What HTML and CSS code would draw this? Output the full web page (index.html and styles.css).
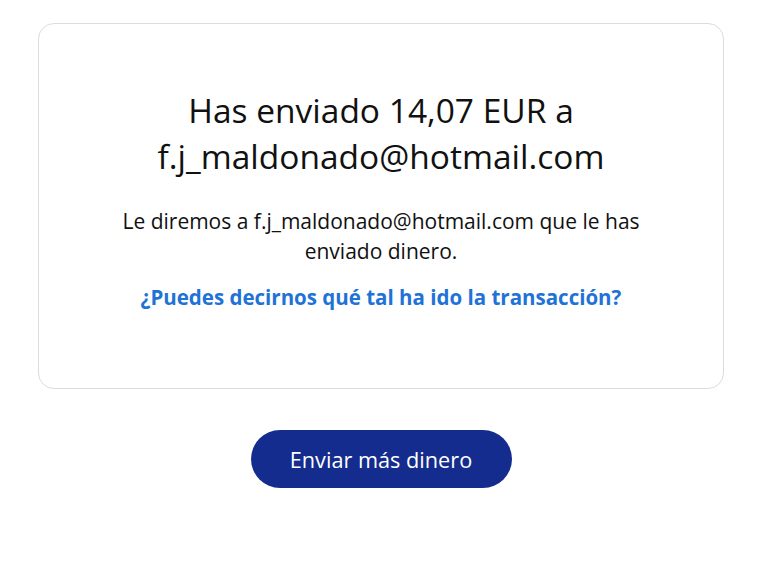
FILE: index.html
```html
<!DOCTYPE html>
<html lang="es">
<head>
    <meta charset="UTF-8">
    <meta name="viewport" content="width=device-width, initial-scale=1.0">
    <title>Dinero enviado</title>
    <link rel="stylesheet" href="styles.css">
</head>
<body>
    <div class="page">
        <div class="card">
            <h1 class="title">Has enviado 14,07 EUR a<br>f.j_maldonado@hotmail.com</h1>
            <p class="note">Le diremos a f.j_maldonado@hotmail.com que le has enviado dinero.</p>
            <a class="feedback" href="#">¿Puedes decirnos qué tal ha ido la transacción?</a>
        </div>

        <div class="actions">
            <button type="button" class="send-more">Enviar más dinero</button>
        </div>
    </div>
</body>
</html>
```

FILE: styles.css
```css
body {
    margin: 0;
    background: #fff;
    font-family: "Open Sans", "Noto Sans", sans-serif;
    color: #111;
}
.page {
    width: 686px;
    margin-left: 38px;
    padding-top: 23px;
}
.card {
    border: 1px solid #dcdcdc;
    border-radius: 16px;
    height: 366px;
    box-sizing: border-box;
    padding: 63px 30px 0;
    display: flex;
    flex-direction: column;
    align-items: center;
    text-align: center;
}
.title {
    margin: 0;
    font-size: 33.5px;
    font-weight: 400;
    line-height: 46px;
}
.note {
    margin: 27px 0 0;
    width: 560px;
    font-size: 21px;
    line-height: 30px;
}
.feedback {
    margin-top: 17px;
    color: #1f72d6;
    font-size: 20.5px;
    font-weight: 700;
    text-decoration: none;
}
.actions {
    display: flex;
    justify-content: center;
    padding-top: 41px;
}
.send-more {
    width: 261px;
    height: 58px;
    border: none;
    border-radius: 29px;
    background-color: #142c8e;
    color: #fff;
    font-family: inherit;
    font-size: 21.7px;
    font-weight: 500;
    cursor: pointer;
}
```
